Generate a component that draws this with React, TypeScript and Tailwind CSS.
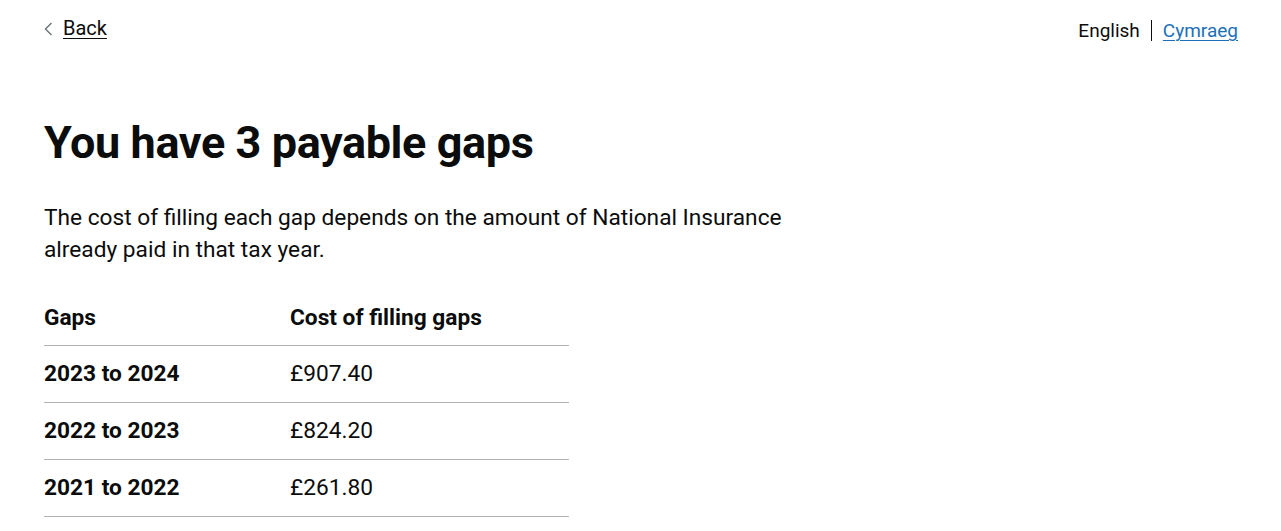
const gaps = [
  { year: "2023 to 2024", cost: "£907.40" },
  { year: "2022 to 2023", cost: "£824.20" },
  { year: "2021 to 2022", cost: "£261.80" },
];

export default function App() {
  return (
    <div className="min-h-screen bg-white pl-[44px] pr-[43px] pt-[16px] text-[#0b0c0c] font-['Roboto',sans-serif]">
      {/* Top bar */}
      <div className="flex items-start justify-between">
        <a href="#" className="flex items-center gap-[10px] text-[20px] leading-[25px]">
          <svg width="9" height="14" viewBox="0 0 9 14" className="text-[#6f777b]">
            <polyline points="7.5,1 1.5,7 7.5,13" fill="none" stroke="currentColor" strokeWidth="1.5" />
          </svg>
          <span className="underline decoration-1 underline-offset-[3px]">Back</span>
        </a>
        <nav className="mt-[2px] flex items-center text-[19px] leading-[25px]">
          <span>English</span>
          <span className="mx-[11px] h-[21px] border-l border-[#0b0c0c]" />
          <a href="#" className="text-[#1d70b8] underline decoration-1 underline-offset-[3px]">
            Cymraeg
          </a>
        </nav>
      </div>

      {/* Heading */}
      <h1 className="mt-[74px] text-[45px] leading-[52px] font-bold tracking-[-0.4px]">You have 3 payable gaps</h1>

      <p className="mt-[33px] max-w-[790px] text-[22.7px] leading-[32px]">
        The cost of filling each gap depends on the amount of National Insurance already paid in that tax year.
      </p>

      {/* Table */}
      <table className="mt-[24px] w-[525px] border-collapse text-[22.7px] leading-[32px]">
        <thead>
          <tr className="border-b border-[#b1b4b6]">
            <th className="w-[246px] pt-[12px] pb-[11px] text-left font-bold">Gaps</th>
            <th className="pt-[12px] pb-[11px] text-left font-bold">Cost of filling gaps</th>
          </tr>
        </thead>
        <tbody>
          {gaps.map((g) => (
            <tr key={g.year} className="border-b border-[#b1b4b6]">
              <th className="py-[12px] text-left font-bold">{g.year}</th>
              <td className="py-[12px]">{g.cost}</td>
            </tr>
          ))}
        </tbody>
      </table>
    </div>
  );
}
